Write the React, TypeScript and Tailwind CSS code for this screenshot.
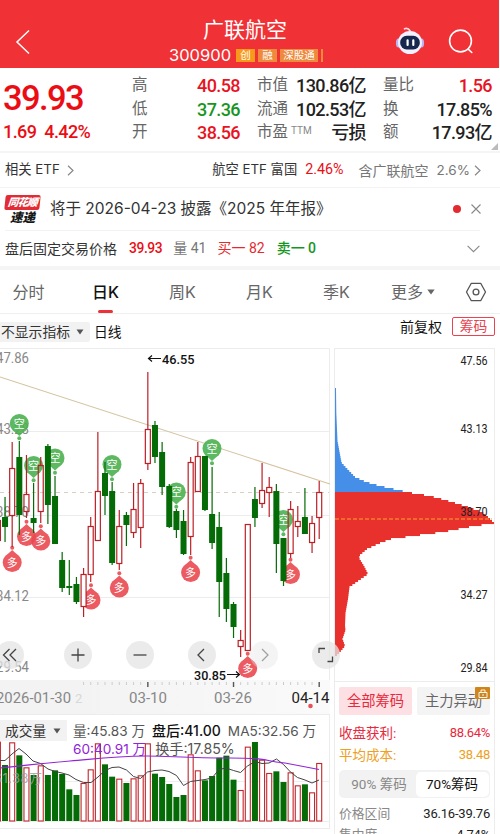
import { clsx } from 'clsx'

type Candle = [up: number, high: number, top: number, bottom: number, low: number]

// up, high, top, bottom, low in chart pixels, first candle sits at x = -2
const candles: Candle[] = [
  [1, 520, 520, 541, 541],
  [0, 497, 517, 527, 542],
  [1, 442, 468, 516, 547],
  [0, 441, 457, 515, 535],
  [1, 455, 494, 512, 518],
  [0, 483, 518, 523, 533],
  [1, 457, 465, 512, 523],
  [0, 444, 446, 505, 524],
  [0, 476, 496, 544, 544],
  [0, 552, 560, 588, 592],
  [0, 560, 586, 588, 595],
  [0, 577, 584, 602, 604],
  [1, 568, 574, 607, 617],
  [1, 517, 526, 575, 582],
  [1, 432, 491, 541, 541],
  [0, 462, 473, 496, 515],
  [0, 482, 491, 563, 565],
  [1, 510, 526, 564, 570],
  [0, 512, 515, 525, 546],
  [1, 483, 509, 533, 538],
  [1, 479, 483, 528, 548],
  [1, 372, 429, 464, 470],
  [0, 421, 425, 457, 463],
  [0, 442, 452, 487, 495],
  [0, 484, 486, 527, 528],
  [0, 509, 511, 530, 538],
  [0, 510, 521, 554, 555],
  [1, 457, 462, 537, 555],
  [1, 442, 456, 492, 492],
  [0, 456, 456, 510, 511],
  [0, 467, 514, 543, 549],
  [0, 512, 527, 582, 617],
  [0, 558, 573, 609, 622],
  [0, 602, 604, 627, 638],
  [1, 630, 640, 647, 657],
  [1, 524, 524, 651, 651],
  [0, 487, 499, 518, 527],
  [1, 463, 490, 504, 508],
  [1, 477, 487, 493, 517],
  [0, 484, 491, 544, 573],
  [0, 538, 538, 581, 586],
  [1, 501, 509, 554, 558],
  [1, 506, 521, 527, 537],
  [0, 488, 517, 534, 534],
  [1, 516, 523, 543, 553],
  [1, 481, 492, 518, 539],
]

const volumes = [
  110, 180, 112, 151, 187, 210, 181, 210, 196, 207, 253, 270, 234, 193, 115, 178, 215, 221, 234, 220, 211, 115, 206,
  216, 237, 276, 270, 148, 196, 226, 213, 158, 152, 224, 255, 125, 111, 164, 204, 199, 231, 202, 241, 238, 262, 174,
]

const signals: { text: string; x: number; y: number }[] = [
  { text: '空', x: 19.3, y: 423.5 },
  { text: '空', x: 33.6, y: 465.5 },
  { text: '空', x: 55, y: 458 },
  { text: '空', x: 112, y: 464.5 },
  { text: '空', x: 176.3, y: 492 },
  { text: '空', x: 212, y: 448.5 },
  { text: '空', x: 283.4, y: 519.5 },
  { text: '多', x: 12.2, y: 562.5 },
  { text: '多', x: 26.5, y: 536.5 },
  { text: '多', x: 40.8, y: 541 },
  { text: '多', x: 91, y: 600 },
  { text: '多', x: 119.3, y: 588 },
  { text: '多', x: 190.6, y: 572.5 },
  { text: '多', x: 247.7, y: 668.5 },
  { text: '多', x: 290.5, y: 574.5 },
]

// chip distribution outline: [y, width]
const chips = [
  [388, 1], [412, 1.3], [440, 2.5], [461.6, 6.5], [466.6, 11], [476, 20], [481, 31], [485, 45], [489, 63], [492, 77],
  [495, 95], [499, 110], [505, 130], [511, 147], [516, 153], [522, 159], [526, 134], [531, 108], [534, 85], [538, 56],
  [542, 45], [548, 32], [554, 25], [557, 24], [565, 29], [573, 33], [586, 14.5], [598, 13], [612, 10.5], [625, 10],
  [629, 10.5], [638, 7.5], [645, 10], [651, 5], [656, 0],
]

const chipRows = Array.from({ length: 135 }, (_, i) => {
  const y = 388 + i * 2
  const k = Math.max(1, chips.findIndex((c) => c[0] >= y))
  const [y0, w0] = chips[k - 1]
  const [y1, w1] = chips[k]
  return { y, w: w0 + ((y - y0) / (y1 - y0)) * (w1 - w0) }
}).filter((r) => r.w > 0 && r.y <= 655)

const priceLabels = [
  ['47.86', 358],
  ['43.28', 429],
  ['38.70', 512],
  ['34.12', 596],
  ['29.54', 667],
] as const

const chipLabels = [
  ['47.56', 360],
  ['43.13', 428],
  ['38.70', 511],
  ['34.27', 594.5],
  ['29.84', 667],
] as const

const candleX = (i: number) => -2.1 + i * 7.14

// hollow candles that let a signal pin show through
const seeThrough = [4, 6, 41]

const din = "font-['Roboto','Noto_Sans_CJK_SC',sans-serif]"

function Header() {
  return (
    <header className="mr-px flex h-[68px] items-start bg-[#f03136] text-white">
      <svg className="mt-[28px] ml-[15px] h-7 w-4" viewBox="0 0 16 28" fill="none" stroke="white" strokeWidth="1.5">
        <path d="M14 2.5 2 14l12 11.5" />
      </svg>
      <div className="ml-[120px] w-[188px] pt-[16px] text-center">
        <h1 className="text-[21px] leading-[28px]">广联航空</h1>
        <div className="mt-[2px] flex items-center gap-[5px] pl-[18px]">
          <span className="w-[62px] text-[16.5px] leading-[18px]">300900</span>
          <span className="flex gap-[3px] text-[10.5px] leading-[13px]">
            <span className="w-[19px] bg-[#f79a1c]">创</span>
            <span className="w-[19px] bg-[#ee8a3c]">融</span>
            <span className="w-[38px] bg-[#ee8a3c]">深股通</span>
            <span className="w-[1.5px] bg-[#ee8a3c]" />
          </span>
        </div>
      </div>
      <svg className="mt-[26px] ml-[56px] h-[30px] w-[30px]" viewBox="0 0 30 30" fill="none">
        <path d="M9.500 2.800c2-.8 4-.5 5.500 2" stroke="#ffd9df" strokeWidth="1.700" strokeLinecap="round" />
        <ellipse cx="3.500" cy="17" rx="2.600" ry="4.500" fill="#b9b5f5" />
        <ellipse cx="26.500" cy="17" rx="2.600" ry="4.500" fill="#b9b5f5" />
        <ellipse cx="15" cy="16.500" rx="12" ry="11.500" fill="#f3f1ff" />
        <rect x="5.200" y="9.800" width="19.600" height="13.600" rx="6.500" fill="#17264d" />
        <path d="M12.600 14.300v4.600M18.300 14.300v4.600" stroke="#fff" strokeWidth="2.200" strokeLinecap="round" />
      </svg>
      <svg
        className="mt-[28px] ml-[23px] h-[27px] w-[27px]"
        viewBox="0 0 27 27"
        fill="none"
        stroke="white"
        strokeWidth="1.600"
        strokeLinecap="round"
      >
        <circle cx="12.500" cy="13" r="10.900" />
        <path d="m20.200 21.200 3.600 3.300" />
      </svg>
    </header>
  )
}

const stats = [
  {
    width: 'w-[108px]',
    rows: [
      ['高', '40.58', 'text-[#e9131f]'],
      ['低', '37.36', 'text-[#16961d]'],
      ['开', '38.56', 'text-[#e9131f]'],
    ],
  },
  {
    width: 'w-[109px]',
    rows: [
      ['市值', '130.86亿', 'text-[#222]'],
      ['流通', '102.53亿', 'text-[#222]'],
      ['市盈', '亏损', 'text-[#222]'],
    ],
  },
  {
    width: 'w-[109px]',
    rows: [
      ['量比', '1.56', 'text-[#e9131f]'],
      ['换', '17.85%', 'text-[#222]'],
      ['额', '17.93亿', 'text-[#222]'],
    ],
  },
]

function Quote() {
  return (
    <section className={clsx('flex h-[83px] pt-[6px]', din)}>
      <div className="w-[132px] pl-[3px] font-medium whitespace-nowrap text-[#ec0d14]">
        <div className="pt-[5px] text-[34.5px] leading-[38px] tracking-[-1.600px]">39.93</div>
        <div className="mt-[3px] flex gap-[8px] text-[18px] leading-[24px] tracking-[-0.600px]">
          <span>1.69</span>
          <span>4.42%</span>
        </div>
      </div>
      <div className="flex gap-[17px]">
        {stats.map((col) => (
          <div key={col.rows[0][0]} className={col.width}>
            {col.rows.map(([label, value, color]) => (
              <div key={label} className="flex h-[23.500px] items-center justify-between whitespace-nowrap">
                <span className="flex text-[15.5px] text-[#666]">
                  {label}
                  {label === '市盈' && <sup className="top-0 ml-[3px] text-[10px] leading-[20px] text-[#888]">TTM</sup>}
                </span>
                <span className={clsx('text-[18px] font-medium tracking-[-0.600px]', color)}>{value}</span>
              </div>
            ))}
          </div>
        ))}
      </div>
      <svg className="mt-[69px] -ml-[1px] h-[7px] w-[7px] shrink-0" viewBox="0 0 7 7">
        <path d="M7 0v7H0z" fill="#bbb" />
      </svg>
    </section>
  )
}

function Chevron({ className }: { className?: string }) {
  return (
    <svg className={clsx('h-[11px] w-[7px]', className)} viewBox="0 0 7 11" fill="none" stroke="#888" strokeWidth="1.200">
      <path d="m1 .8 5 4.700-5 4.700" />
    </svg>
  )
}

function InfoRows() {
  return (
    <section className="text-[#333]">
      <div className="flex h-[36px] items-center border-t-2 border-[#f5f5f5] text-[13.300px] whitespace-nowrap">
        <span className="ml-[5px]">相关 ETF</span>
        <Chevron className="ml-[7px]" />
        <span className="ml-auto">航空 ETF 富国</span>
        <span className={clsx('ml-[8px] text-[14.300px] text-[#ec0d14]', din)}>2.46%</span>
        <span className="ml-[15px] text-[14px] text-[#777]">含广联航空</span>
        <span className="ml-[8px] text-[13.500px] text-[#777]">2.6%</span>
        <Chevron className="mr-[19px] ml-[4px]" />
      </div>
      <div className="flex h-[43px] items-center border-t border-[#f3f3f3]">
        <div className="ml-[5px] w-[35px] text-center leading-none font-black italic">
          <div className="-skew-x-6 rounded-[2px] bg-[#e32b35] py-[1.500px] text-[10.500px] leading-[12px] tracking-[-0.800px] text-white">
            同花顺
          </div>
          <div className="mt-[1px] text-[12.500px] leading-[13px] text-[#181818]">速递</div>
        </div>
        <span className="ml-[10px] text-[15.500px] whitespace-nowrap text-[#333]">将于 2026-04-23 披露《2025 年年报》</span>
        <span className="ml-auto h-[8px] w-[8px] rounded-full bg-[#e32b2f]" />
        <svg className="mr-[19px] ml-[10px] h-[10px] w-[10px]" viewBox="0 0 10 10" stroke="#888" strokeWidth="1.100">
          <path d="m.5.500 9 9m0-9-9 9" />
        </svg>
      </div>
      <div className="mr-5 ml-[5px] flex h-[36px] items-center border-t border-[#f3f3f3] text-[14px] whitespace-nowrap">
        <span>盘后固定交易价格</span>
        <span className={clsx('ml-[12px] text-[13.800px] font-medium tracking-[-0.400px] text-[#ec0d14]', din)}>39.93</span>
        <span className={clsx('ml-[11px] text-[#777]', din)}>量 41</span>
        <span className={clsx('ml-[11px] text-[#e32b2f]', din)}>买一 82</span>
        <span className={clsx('ml-[12px] font-medium text-[#16961d]', din)}>卖一 0</span>
        <svg className="ml-auto h-[8px] w-[13px]" viewBox="0 0 13 8" fill="none" stroke="#888" strokeWidth="1.100">
          <path d="m.6.800 5.900 5.900L12.400.8" />
        </svg>
      </div>
    </section>
  )
}

function Tabs() {
  const tabs = ['分时', '日K', '周K', '月K', '季K']
  return (
    <nav className="flex h-[44px] border-b border-[#eef0f0] text-[16px] text-[#666]">
      <div className="flex w-[374px]">
        {tabs.map((tab) => (
          <div
            key={tab}
            className={clsx(
              'flex w-[77px] shrink-0 flex-col items-center pt-[9px] leading-[26px] first:mr-[10px] first:w-[57px]',
              tab === '日K' && 'font-medium text-[#111]',
            )}
          >
            {tab}
            {tab === '日K' && <span className="mt-[5px] h-[3px] w-[15px] rounded-full bg-[#ea3238]" />}
          </div>
        ))}
      </div>
      <span className="ml-[17px] pt-[9px] leading-[26px]">更多</span>
      <svg className="mt-[19px] ml-[4px] h-[6px] w-[8px]" viewBox="0 0 8 6">
        <path d="M.3.500h7.400L4 5.500z" fill="#666" />
      </svg>
      <svg
        className="mt-[12px] ml-[30px] h-[20px] w-[22px]"
        viewBox="0 0 22 20"
        fill="none"
        stroke="#555"
        strokeWidth="1.300"
        strokeLinejoin="round"
      >
        <path d="M6.300 1.300h9.400L20.500 10l-4.800 8.700H6.300L1.500 10z" />
        <circle cx="11" cy="10" r="2.900" />
      </svg>
    </nav>
  )
}

function Toolbar() {
  return (
    <div className="flex h-[34px] items-center text-[13.800px] text-[#111]">
      <span className="mt-[2px] flex h-[20px] w-[90px] items-center rounded-r-[2px] bg-[#f2f2f2] pl-[1px] whitespace-nowrap text-[#333]">
        不显示指标
        <svg className="ml-[6px] h-[6px] w-[8px]" viewBox="0 0 8 6">
          <path d="M.5.500h7L4 5.500z" fill="#555" />
        </svg>
      </span>
      <span className="mt-[2px] ml-[4px]">日线</span>
      <span className="mb-[9px] ml-auto text-[14px]">前复权</span>
      <span className="mr-[5px] mb-[9px] ml-[10px] flex h-[19px] w-[43px] items-center justify-center rounded-[2px] border border-[#e8434f] text-[#e8434f]">
        筹码
      </span>
    </div>
  )
}

function Signal({ text, x, y }: { text: string; x: number; y: number }) {
  const long = text === '多'
  const color = long ? '#ea4a50' : '#4cb152'
  return (
    <g opacity="0.9">
      <circle cx={x} cy={y} r="9.500" fill={color} />
      <path
        d={long ? `M${x - 6} ${y - 7}L${x} ${y - 12.5}l6 5.500z` : `M${x - 6} ${y + 7}L${x} ${y + 12.5}l6-5.500z`}
        fill={color}
      />
      <circle cx={x} cy={long ? y - 14.7 : y + 14.7} r="2" fill={color} />
      <text x={x} y={y + 4} fontSize="11" textAnchor="middle" fill="#fff">
        {text}
      </text>
    </g>
  )
}

function CandleChart() {
  return (
    <svg className={clsx('block h-[332px] w-[334px]', din)} viewBox="0 348 334 332">
      <g stroke="#ececec" fill="none">
        <path d="M0 348.500h329.500V680M0 431.500h329M0 515.500h329M0 597.500h329" />
      </g>
      <path d="M0 492.500h329" stroke="#d9cfc2" strokeDasharray="4 4" />
      <g fontSize="14" fill="#888">
        {priceLabels.map(([label, y]) => (
          <text key={label} x="-4" y={y + 5} textLength="33" lengthAdjust="spacingAndGlyphs">
            {label}
          </text>
        ))}
      </g>
      <path d="M0 377 330 484" stroke="#d6c3a0" strokeWidth="1.100" />
      {signals.map((s) => (
        <Signal key={`${s.x}-${s.y}`} {...s} />
      ))}
      {candles.map(([up, high, top, bottom, low], i) => {
        const x = candleX(i)
        return up ? (
          <g key={i} stroke="#bb2026" strokeWidth="1.200" fill="none">
            <path d={`M${x} ${high}V${top}M${x} ${bottom}V${low}`} />
            <rect
              x={x - 2.5}
              y={top + 0.5}
              width="5"
              height={bottom - top - 1}
              fill={seeThrough.includes(i) ? 'none' : '#fff'}
            />
          </g>
        ) : (
          <g key={i} fill="#056b07">
            <rect x={x - 0.6} y={high} width="1.200" height={low - high} />
            <rect x={x - 3} y={top} width="6" height={bottom - top} />
          </g>
        )
      })}
      <g stroke="#111" strokeWidth="1.200" fill="none">
        <path d="M161 358.500h-12.500m3.500-3-3.500 3 3.500 3" />
        <path d="M227 674.500h12.500m-3.500-3 3.500 3-3.500 3" />
      </g>
      <g fontSize="13.500" fontWeight="500" fill="#111">
        <text x="162" y="363.500" textLength="32.500" lengthAdjust="spacingAndGlyphs">
          46.55
        </text>
        <text x="194" y="679.500" textLength="32" lengthAdjust="spacingAndGlyphs">
          30.85
        </text>
      </g>
    </svg>
  )
}

const controls = [
  { left: 'left-[-4px]', d: 'M13.500 8 7.500 14l6 6M20 8l-6 6 6 6' },
  { left: 'left-[64px]', d: 'M14 7.500v13M7.500 14h13' },
  { left: 'left-[126px]', d: 'M7.500 14h13' },
  { left: 'left-[188px]', d: 'M16 8l-6 6 6 6' },
  { left: 'left-[250px] opacity-50', d: 'M12 8l6 6-6 6' },
  { left: 'left-[312px]', d: 'M7 12V7.500h6M15.500 20.500h5V15.500' },
]

function TimeAxis() {
  return (
    <svg className={clsx('block h-[34px] w-[330px]', din)} viewBox="0 680 330 34">
      <defs>
        <linearGradient id="axis" x2="1">
          <stop offset="0.240" stopColor="#f3f3f3" />
          <stop offset="1" stopColor="#fafafa" />
        </linearGradient>
      </defs>
      <rect y="680" width="330" height="34" fill="url(#axis)" />
      {Array.from({ length: 34 }, (_, k) => k + 12).map((i) => {
        const major = i === 21 || i === 33 || i === 45
        return (
          <path
            key={i}
            d={`M${candleX(i)} 682V${major ? 687 : 685}`}
            stroke={major ? '#555' : '#ccc'}
            strokeWidth={major ? 1.4 : 1}
          />
        )
      })}
      <g fontSize="14" fill="#888">
        <text x="-4" y="702.500" textLength="75" lengthAdjust="spacingAndGlyphs">
          2026-01-30
        </text>
        <text x="75" y="702.500" fill="#d8d8d8" fontSize="13">
          2
        </text>
        <text x="129" y="702.500" textLength="38" lengthAdjust="spacingAndGlyphs">
          03-10
        </text>
        <text x="214" y="702.500" textLength="38" lengthAdjust="spacingAndGlyphs">
          03-26
        </text>
        <text x="291.500" y="702.500" fill="#222" textLength="38" lengthAdjust="spacingAndGlyphs">
          04-14
        </text>
      </g>
      <circle cx="310.500" cy="706" r="2.300" fill="#e5535a" />
    </svg>
  )
}

function VolumeChart() {
  return (
    <div className="relative h-[115px] w-[330px] border border-l-0 border-[#ececec]">
      <svg className="absolute top-0 left-0 h-[113px] w-[329px]" viewBox="0 715 329 113">
        <path d="M0 781.500h329M0 821.500h329" stroke="#eee" />
        {volumes.map((v, i) => {
          const x = candleX(i)
          const y = 705 + v / 3
          return candles[i][0] ? (
            <rect key={i} x={x - 2.5} y={y + 0.5} width="5" height={820.5 - y} fill="#fff" stroke="#c1272d" strokeWidth="1.100" />
          ) : (
            <rect key={i} x={x - 3} y={y} width="6" height={821 - y} fill="#056b07" />
          )
        })}
        <path
          d="M0 760.500 5 760.500 12 754 19 748.500 26 754 33 761 40.500 763.500 48 769 55 771.500 62 773 69 775 76 779.500 83.500 782.500 91 782.500 98 777 105 770.500 112 767.500 119 767 126.500 770 133.500 776.500 140.500 778.500 147.500 772 155 770.500 162 770 169 771.500 176.500 775.500 183.500 785.500 190.500 781.500 198 780.500 205 779.500 212 778 219 769.500 226 768 233.500 770.500 240.500 772.500 247.500 766 255 761.500 262 763.500 269 763 276.500 759 283.500 764.500 290.500 772 297.500 777.500 305 780 312 783 319 780"
          fill="none"
          stroke="#444"
        />
        <path
          d="M0 768C20 766 45 763 70 761S110 756.500 147 756C170 756 185 758 230 758S260 761 285 763L319 769.500"
          fill="none"
          stroke="#9124d8"
          strokeWidth="1.200"
        />
        <text x="-6" y="783" fontSize="13" fill="#a0a0a0" fillOpacity="0.850" textLength="48">
          61.38万
        </text>
      </svg>
      <div className="relative pt-[5px] text-[13.600px] leading-[20px] whitespace-nowrap text-[#555]">
        <div className="flex items-center">
          <span className="flex h-[21px] w-[67px] items-center bg-[#f2f2f2] pl-[5px] text-[13.700px] text-[#333]">
            成交量
            <svg className="ml-[7px] h-[6px] w-[8px]" viewBox="0 0 8 6">
              <path d="M.5.500h7L4 5.500z" fill="#555" />
            </svg>
          </span>
          <span className="ml-[6px]">量:45.83 万</span>
          <span className="ml-[7px] text-[14px] font-medium text-[#111]">盘后:41.00</span>
          <span className="ml-[7px]">MA5:32.56 万</span>
        </div>
        <div className="-mt-[2px] flex pl-[73px]">
          <span className="text-[#9124d8]">60:40.91 万</span>
          <span className="ml-[9px] text-[14.200px]">换手:17.85%</span>
        </div>
      </div>
    </div>
  )
}

function ChipPanel() {
  return (
    <aside className={clsx('w-[161px] border-x border-t border-[#ececec] text-[13.500px]', din)}>
      <svg className="-ml-px block h-[332px] w-[161px]" viewBox="334 349 161 332">
        {chipRows.map((r) => (
          <rect key={r.y} x="335" y={r.y} width={r.w} height="2.050" fill={r.y < 492 ? '#458fe8' : '#e8302d'} />
        ))}
        <path d="M335 519h157" stroke="#f4a62a" strokeWidth="1.200" strokeDasharray="4 2" />
        <g fontSize="12.500" fill="#222">
          {chipLabels.map(([label, y]) => (
            <text key={label} x="460.500" y={y + 4.5} textLength="27" lengthAdjust="spacingAndGlyphs">
              {label}
            </text>
          ))}
        </g>
      </svg>
      <div className="border-t border-[#ececec] pt-[5px] pr-[4px] pl-[4px]">
        <div className="flex gap-[5px] text-[14.300px] leading-[28px]">
          <span className="w-[73px] rounded-[2px] bg-[#fde0e3] text-center text-[#e8283c]">全部筹码</span>
          <span className="relative w-[73px] rounded-[2px] bg-[#f4f4f4] text-center whitespace-nowrap text-[#666]">
            主力异动
            <span className="absolute top-0 right-0 flex h-[12px] w-[15px] items-center justify-center rounded-[1px] bg-[#cf851b]">
              <svg className="h-[9px] w-[10px]" viewBox="0 0 10 9" fill="none" stroke="#fff" strokeWidth="0.900">
                <path d="M1 3.500h8v5H1zM3 3.500V1h4v2.500M5 5v2" />
              </svg>
            </span>
          </span>
        </div>
        <div className="mt-[7px] flex justify-between text-[#e8283c]">
          <span className="leading-[22px]">收盘获利:</span>
          <span className="text-[13px] leading-[22px] tracking-[-0.300px]">88.64%</span>
        </div>
        <div className="flex justify-between text-[#eda124]">
          <span className="leading-[22px]">平均成本:</span>
          <span className="text-[13px] leading-[22px] tracking-[-0.300px]">38.48</span>
        </div>
        <div className="mt-[4px] flex h-[28px] items-center rounded-[5px] bg-[#f2f2f2] p-[1.500px] text-[13.500px] leading-[25px] whitespace-nowrap">
          <span className="w-[75px] pl-[2px] text-center text-[#888]">90% 筹码</span>
          <span className="w-[73px] rounded-[5px] bg-white text-center text-[#111]">70%筹码</span>
        </div>
        <div className="mt-[5px] flex justify-between text-[12.800px] leading-[21px] whitespace-nowrap">
          <span className="text-[#888]">价格区间</span>
          <span className="text-[13px] tracking-[-0.200px] text-[#222]">36.16-39.76</span>
        </div>
        <div className="flex justify-between text-[12.800px] leading-[22px]">
          <span className="text-[#888]">集中度</span>
          <span className="text-[13px] tracking-[-0.200px] text-[#222]">4.74%</span>
        </div>
      </div>
    </aside>
  )
}

export default function App() {
  return (
    <main className="h-[834px] w-[500px] overflow-hidden bg-white font-['Inter','Noto_Sans_CJK_SC',sans-serif]">
      <Header />
      <Quote />
      <InfoRows />
      <div className="h-[4px] bg-[#f5f5f5]" />
      <Tabs />
      <Toolbar />
      <div className="flex">
        <div className="relative w-[334px]">
          <CandleChart />
          {controls.map((c) => (
            <button key={c.d} className={clsx('absolute top-[293px] h-[28px] w-[28px] rounded-full bg-[#e4e4e4]/75', c.left)}>
              <svg viewBox="0 0 28 28" fill="none" stroke="#444" strokeWidth="1.300">
                <path d={c.d} />
              </svg>
            </button>
          ))}
          <TimeAxis />
          <VolumeChart />
        </div>
        <ChipPanel />
      </div>
    </main>
  )
}
